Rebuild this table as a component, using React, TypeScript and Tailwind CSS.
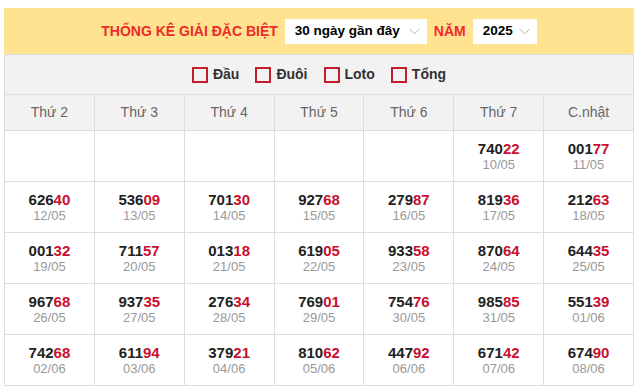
import { useState } from 'react'

type Cell = { num: string; date: string } | null

const weekdays = ['Thứ 2', 'Thứ 3', 'Thứ 4', 'Thứ 5', 'Thứ 6', 'Thứ 7', 'C.nhật']

const rows: Cell[][] = [
  [null, null, null, null, null, { num: '74022', date: '10/05' }, { num: '00177', date: '11/05' }],
  [
    { num: '62640', date: '12/05' },
    { num: '53609', date: '13/05' },
    { num: '70130', date: '14/05' },
    { num: '92768', date: '15/05' },
    { num: '27987', date: '16/05' },
    { num: '81936', date: '17/05' },
    { num: '21263', date: '18/05' },
  ],
  [
    { num: '00132', date: '19/05' },
    { num: '71157', date: '20/05' },
    { num: '01318', date: '21/05' },
    { num: '61905', date: '22/05' },
    { num: '93358', date: '23/05' },
    { num: '87064', date: '24/05' },
    { num: '64435', date: '25/05' },
  ],
  [
    { num: '96768', date: '26/05' },
    { num: '93735', date: '27/05' },
    { num: '27634', date: '28/05' },
    { num: '76901', date: '29/05' },
    { num: '75476', date: '30/05' },
    { num: '98585', date: '31/05' },
    { num: '55139', date: '01/06' },
  ],
  [
    { num: '74268', date: '02/06' },
    { num: '61194', date: '03/06' },
    { num: '37921', date: '04/06' },
    { num: '81062', date: '05/06' },
    { num: '44792', date: '06/06' },
    { num: '67142', date: '07/06' },
    { num: '67490', date: '08/06' },
  ],
]

function Chevron() {
  return (
    <svg width="11" height="7" viewBox="0 0 11 7" className="ml-auto">
      <polyline points="0.5,0.8 5.5,5.8 10.5,0.8" fill="none" stroke="#b4b4b4" strokeWidth="1" />
    </svg>
  )
}

function Select({ value, width }: { value: string; width: string }) {
  return (
    <div className={`flex h-[25px] items-center bg-white pl-[10px] pr-[7px] text-[13.5px] font-bold text-black ${width}`}>
      <span>{value}</span>
      <Chevron />
    </div>
  )
}

export default function App() {
  const [checked, setChecked] = useState<Record<string, boolean>>({})
  const filters = ['Đầu', 'Đuôi', 'Loto', 'Tổng']

  return (
    <div className="pl-1 pt-2" style={{ fontFamily: '"Liberation Sans", Arial, sans-serif' }}>
      <div className="w-[630px]">
        <div className="flex h-[46px] items-center justify-center gap-[6px] bg-[#ffe391]">
          <span className="mr-px text-[14px] font-bold text-[#ee2a2a]">THỐNG KÊ GIẢI ĐẶC BIỆT</span>
          <Select value="30 ngày gần đây" width="w-[142px]" />
          <span className="mx-px text-[14px] font-bold text-[#ee2a2a]">NĂM</span>
          <Select value="2025" width="w-[64px]" />
        </div>

        <div className="flex h-[41px] items-center justify-center gap-4 border border-[#dddddd] bg-[#f2f2f2]">
          {filters.map((f) => (
            <label key={f} className="flex cursor-pointer items-center gap-[5px]" onClick={() => setChecked({ ...checked, [f]: !checked[f] })}>
              <span className={`h-4 w-4 border-2 border-[#c11f2e] ${checked[f] ? 'bg-[#c11f2e]' : ''}`} />
              <span className="text-[14px] font-bold text-[#333333]">{f}</span>
            </label>
          ))}
        </div>

        <div className="grid grid-cols-7 border-l border-[#dddddd]">
          {weekdays.map((d) => (
            <div key={d} className="flex h-[36px] items-center justify-center border-b border-r border-[#dddddd] bg-[#f2f2f2] text-[14px] text-[#666666]">
              {d}
            </div>
          ))}
          {rows.flat().map((c, i) => (
            <div key={i} className="flex h-[51px] flex-col items-center justify-center border-b border-r border-[#dddddd] bg-white">
              {c && (
                <>
                  <div className="text-[15px] font-bold leading-[17px] text-[#222222]">
                    {c.num.slice(0, 3)}
                    <span className="text-[#c8102e]">{c.num.slice(3)}</span>
                  </div>
                  <div className="text-[13px] leading-[16px] text-[#999999]">{c.date}</div>
                </>
              )}
            </div>
          ))}
        </div>
      </div>
    </div>
  )
}
